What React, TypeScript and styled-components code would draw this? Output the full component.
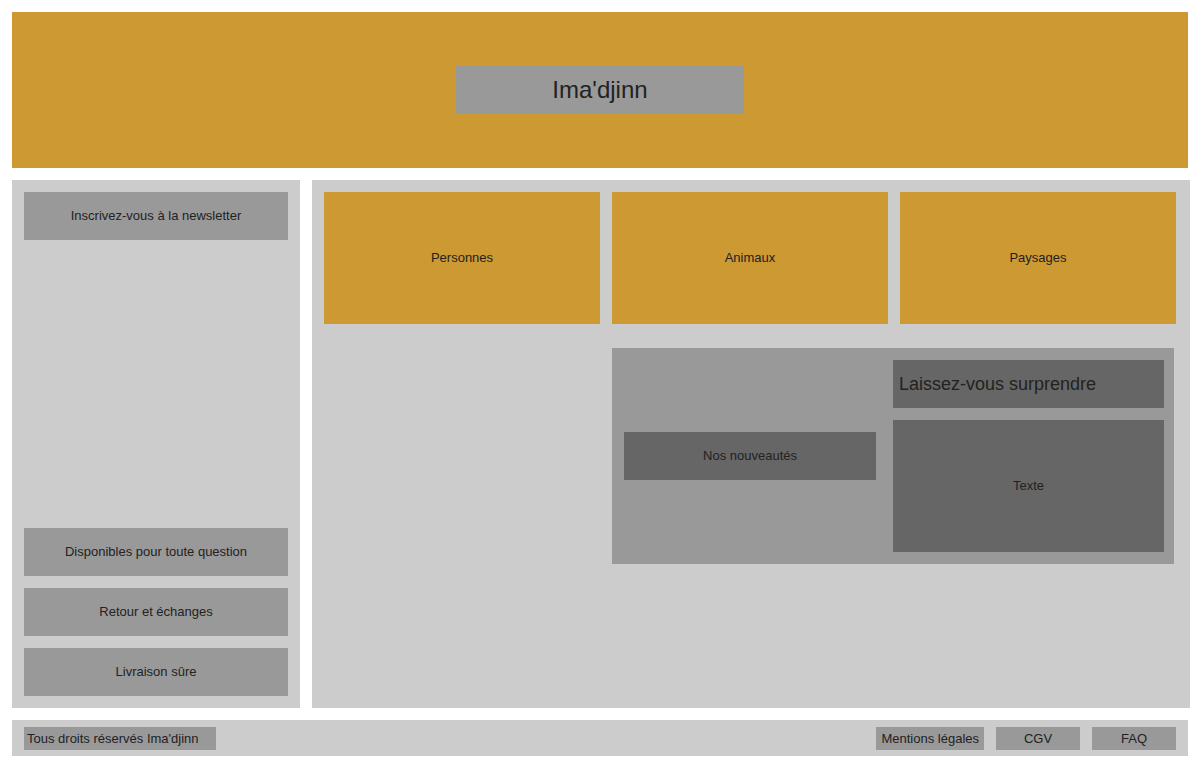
import React from 'react';
import styled, {createGlobalStyle} from "styled-components";

const colors = {
    gold: '#cc9933',
    light: '#cccccc',
    mid: '#999999',
    dark: '#666666',
    text: '#222222',
}

const GlobalStyle = createGlobalStyle`
  * {
    box-sizing: border-box;
  }
  body {
    margin: 0;
    background: #ffffff;
    font-family: "Liberation Sans", Arial, sans-serif;
    color: ${colors.text};
  }
`

export default function App() {
    return (
        <>
            <GlobalStyle/>
            <Page>
                <Header>
                    <Logo>Ima'djinn</Logo>
                </Header>

                <Main>
                    <Sidebar>
                        <SideBox>Inscrivez-vous à la newsletter</SideBox>
                        <Spacer/>
                        <SideBox>Disponibles pour toute question</SideBox>
                        <SideBox>Retour et échanges</SideBox>
                        <SideBox>Livraison sûre</SideBox>
                    </Sidebar>

                    <Content>
                        <Categories>
                            <Category>Personnes</Category>
                            <Category>Animaux</Category>
                            <Category>Paysages</Category>
                        </Categories>

                        <Promo>
                            <PromoLeft>
                                <DarkBox>Nos nouveautés</DarkBox>
                            </PromoLeft>
                            <PromoRight>
                                <SurpriseTitle>Laissez-vous surprendre</SurpriseTitle>
                                <TextBox>Texte</TextBox>
                            </PromoRight>
                        </Promo>
                    </Content>
                </Main>

                <Footer>
                    <Copyright>Tous droits réservés Ima'djinn</Copyright>
                    <FooterLinks>
                        <FooterLink>Mentions légales</FooterLink>
                        <FooterLink $width={84}>CGV</FooterLink>
                        <FooterLink $width={84}>FAQ</FooterLink>
                    </FooterLinks>
                </Footer>
            </Page>
        </>
    );
}

const Page = styled.div`
  padding: 12px;
  display: flex;
  flex-direction: column;
  gap: 12px;
  width: 1200px;
`
const Header = styled.header`
  width: 1176px;
  height: 156px;
  background-color: ${colors.gold};
  display: flex;
  justify-content: center;
  align-items: center;
`
const Logo = styled.h1`
  margin: 0;
  width: 288px;
  height: 48px;
  background-color: ${colors.mid};
  display: flex;
  justify-content: center;
  align-items: center;
  font-size: 24px;
  font-weight: 400;
`
const Main = styled.main`
  display: flex;
  gap: 12px;
  height: 528px;
  width: 1178px;
`
const Sidebar = styled.aside`
  width: 288px;
  flex-shrink: 0;
  background-color: ${colors.light};
  padding: 12px;
  display: flex;
  flex-direction: column;
  gap: 12px;
`
const Spacer = styled.div`
  flex: 1;
`
const SideBox = styled.div`
  height: 48px;
  background-color: ${colors.mid};
  display: flex;
  justify-content: center;
  align-items: center;
  padding-bottom: 1px;
  font-size: 13px;
`
const Content = styled.section`
  width: 878px;
  flex-shrink: 0;
  background-color: ${colors.light};
  padding: 12px 14px 12px 12px;
  display: flex;
  flex-direction: column;
  gap: 24px;
`
const Categories = styled.div`
  display: grid;
  grid-template-columns: repeat(3, 276px);
  gap: 12px;
`
const Category = styled.div`
  height: 132px;
  background-color: ${colors.gold};
  display: flex;
  justify-content: center;
  align-items: center;
  padding-bottom: 1px;
  font-size: 13px;
`
const Promo = styled.div`
  margin-left: 288px;
  width: 562px;
  height: 216px;
  background-color: ${colors.mid};
  padding: 12px 10px 12px 12px;
  display: grid;
  grid-template-columns: 252px 271px;
  column-gap: 17px;
`
const PromoLeft = styled.div`
  display: flex;
  align-items: center;
`
const DarkBox = styled.div`
  width: 100%;
  height: 48px;
  background-color: ${colors.dark};
  display: flex;
  justify-content: center;
  align-items: center;
  padding-bottom: 1px;
  font-size: 13px;
`
const PromoRight = styled.div`
  display: flex;
  flex-direction: column;
  gap: 12px;
`
const SurpriseTitle = styled.h2`
  margin: 0;
  height: 48px;
  background-color: ${colors.dark};
  display: flex;
  align-items: center;
  padding-left: 6px;
  font-size: 18px;
  font-weight: 400;
`
const TextBox = styled.div`
  height: 132px;
  background-color: ${colors.dark};
  display: flex;
  justify-content: center;
  align-items: center;
  padding-bottom: 1px;
  font-size: 13px;
`
const Footer = styled.footer`
  width: 1176px;
  height: 36px;
  background-color: ${colors.light};
  padding: 7px 12px 6px;
  display: flex;
  justify-content: space-between;
  align-items: stretch;
  font-size: 13px;
`
const Copyright = styled.small`
  width: 192px;
  background-color: ${colors.mid};
  padding-left: 3px;
  display: flex;
  align-items: center;
  font-size: 13px;
`
const FooterLinks = styled.nav`
  display: flex;
  gap: 12px;
`
const FooterLink = styled.a<{ $width?: number }>`
  ${({$width}) => $width ? `width: ${$width}px;` : 'padding: 0 5px;'}
  background-color: ${colors.mid};
  display: flex;
  justify-content: center;
  align-items: center;
  color: ${colors.text};
  text-decoration: none;
`
